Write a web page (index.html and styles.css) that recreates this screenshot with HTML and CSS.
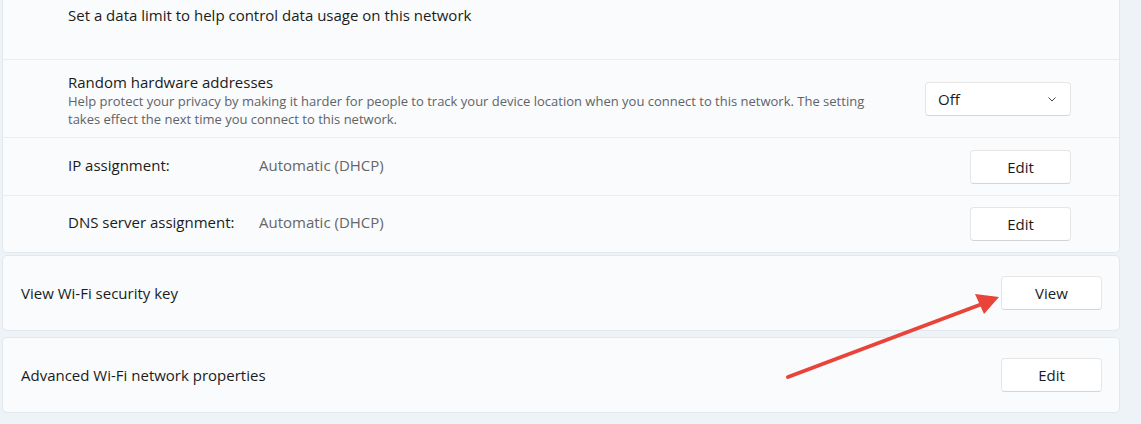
FILE: index.html
```html
<!DOCTYPE html>
<html lang="en">
<head>
    <meta charset="UTF-8">
    <meta name="viewport" content="width=device-width, initial-scale=1.0">
    <title>Wi-Fi properties</title>
    <link rel="stylesheet" href="styles.css">
</head>
<body>
    <div class="page">
        <div class="card group">
            <div class="row row-limit">
                <span class="label">Set a data limit to help control data usage on this network</span>
            </div>
            <div class="row row-random">
                <div class="text">
                    <div class="title">Random hardware addresses</div>
                    <div class="desc">Help protect your privacy by making it harder for people to track your device location when you connect to this network. The setting takes effect the next time you connect to this network.</div>
                </div>
                <div class="dropdown">
                    <span>Off</span>
                    <svg width="12" height="12" viewBox="0 0 12 12"><path d="M2.5 4.5 L6 8 L9.5 4.5" fill="none" stroke="#444" stroke-width="1"/></svg>
                </div>
            </div>
            <div class="row row-ip">
                <span class="key">IP assignment:</span>
                <span class="value">Automatic (DHCP)</span>
                <button class="btn">Edit</button>
            </div>
            <div class="row row-dns">
                <span class="key">DNS server assignment:</span>
                <span class="value">Automatic (DHCP)</span>
                <button class="btn">Edit</button>
            </div>
        </div>

        <div class="card single view-card">
            <span class="label">View Wi-Fi security key</span>
            <button class="btn">View</button>
        </div>

        <div class="card single adv-card">
            <span class="label">Advanced Wi-Fi network properties</span>
            <button class="btn">Edit</button>
        </div>

        <!-- annotation arrow -->
        <svg class="arrow" width="1141" height="424" viewBox="0 0 1141 424">
            <line x1="788" y1="377" x2="982" y2="304" stroke="#e8443a" stroke-width="4" stroke-linecap="round"/>
            <polygon points="999,297 975,294 984,314" fill="#e8443a"/>
        </svg>
    </div>
</body>
</html>
```

FILE: styles.css
```css
body {
    margin: 0;
    padding: 0;
    background-color: #eef3f8;
    font-family: "Open Sans", "Noto Sans", sans-serif;
    font-size: 15px;
    color: #1b1b1b;
}
.page {
    position: relative;
    width: 1141px;
    height: 424px;
    overflow: hidden;
    padding-left: 2px;
    box-sizing: border-box;
}
.card {
    width: 1118px;
    box-sizing: border-box;
    background-color: #f9fbfd;
    border: 1px solid #e3e8ee;
    border-radius: 5px;
}
.group {
    border-top: none;
    border-top-left-radius: 0;
    border-top-right-radius: 0;
    height: 253px;
}
.row {
    display: flex;
    align-items: center;
    box-sizing: border-box;
    padding-left: 65px;
    padding-right: 48px;
    border-bottom: 1px solid #eaeef3;
}
.row:last-child {
    border-bottom: none;
}
.row-limit {
    height: 60px;
    align-items: flex-start;
    padding-top: 5px;
}
.row-random {
    height: 78px;
}
.row-ip {
    height: 58px;
}
.row-dns {
    height: 56px;
}
.row-ip .key, .row-ip .value, .row-dns .key, .row-dns .value {
    margin-top: -4px;
}
.text {
    flex: 1;
    padding-right: 30px;
    padding-top: 2px;
}
.title {
    line-height: 20px;
}
.desc {
    font-size: 13px;
    line-height: 18px;
    color: #5f6368;
    max-width: 830px;
}
.dropdown {
    width: 146px;
    height: 34px;
    box-sizing: border-box;
    background-color: #fff;
    border: 1px solid #e6e6e6;
    border-bottom-color: #d6d6d6;
    border-radius: 4px;
    display: flex;
    align-items: center;
    justify-content: space-between;
    padding: 0 12px 0 12px;
    font-size: 15px;
}
.key {
    width: 191px;
}
.value {
    flex: 1;
    color: #666;
}
.btn {
    width: 101px;
    height: 34px;
    background-color: #fff;
    border: 1px solid #e6e6e6;
    border-bottom-color: #d4d4d4;
    border-radius: 4px;
    font-family: inherit;
    font-size: 15px;
    color: #1b1b1b;
    padding: 0;
}
.single {
    height: 76px;
    display: flex;
    align-items: center;
    justify-content: space-between;
    padding-left: 18px;
    padding-right: 17px;
}
.view-card {
    margin-top: 2px;
}
.adv-card {
    margin-top: 6px;
}
.arrow {
    position: absolute;
    left: 0;
    top: 0;
    pointer-events: none;
}
```
